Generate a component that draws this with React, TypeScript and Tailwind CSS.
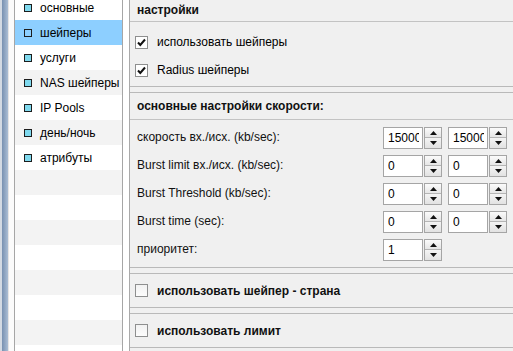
import React from "react";

const font = { fontFamily: '"Liberation Sans", Arial, sans-serif' };

const items = ["основные", "шейперы", "услуги", "NAS шейперы", "IP Pools", "день/ночь", "атрибуты"];

function Check({ checked }: { checked: boolean }) {
  return (
    <div className={"w-[13px] h-[13px] border border-[#8e8f8f] flex items-center justify-center shrink-0 " + (checked ? "bg-white" : "bg-gradient-to-b from-[#f2f2f2] to-[#fcfcfc]")}>
      {checked && (
        <svg width="11" height="11" viewBox="0 0 11 11">
          <path d="M2 5.5 L4.3 8 L9 2.5" stroke="#111" strokeWidth="2" fill="none" />
        </svg>
      )}
    </div>
  );
}

function Spinner({ value }: { value: string }) {
  return (
    <div className="flex h-[22px]">
      <div className="w-[40px] h-[22px] border border-[#a5a5a5] bg-white flex items-center">
        <div className="ml-[4px] w-[31px] overflow-hidden whitespace-nowrap text-[12px] leading-none text-black">{value}</div>
      </div>
      <div className="ml-[1px] w-[18px] h-[22px] flex flex-col border border-[#a5a5a5]">
        <div className="h-[10px] flex items-center justify-center bg-gradient-to-b from-[#fbfbfb] to-[#e6e6e6] border-b border-[#b5b5b5]">
          <svg width="7" height="4" viewBox="0 0 7 4"><path d="M0 4 L3.5 0 L7 4 Z" fill="#111" /></svg>
        </div>
        <div className="flex-1 flex flex-col items-center justify-center bg-gradient-to-b from-[#f4f4f4] to-[#e2e2e2]">
          <svg width="7" height="4" viewBox="0 0 7 4"><path d="M0 0 L7 0 L3.5 4 Z" fill="#111" /></svg>
        </div>
      </div>
    </div>
  );
}

function SpeedRow({ label, a, b }: { label: string; a: string; b?: string }) {
  return (
    <div className="h-[28px] flex items-center pr-[6px]">
      <div className="flex-1 pl-[7px] text-[12px] text-[#111] -mt-[2px]">{label}</div>
      <div className="w-[124px] flex gap-[6px]">
        <Spinner value={a} />
        {b !== undefined && <Spinner value={b} />}
      </div>
    </div>
  );
}

export default function App() {
  const rows = Array.from({ length: 15 }, (_, i) => i);
  return (
    <div className="w-[513px] h-[351px] overflow-hidden flex bg-white text-black" style={font}>
      <div className="w-[2px] h-full bg-[#d3dae3]" />
      <div className="w-[6px] h-full bg-gradient-to-r from-[#7891b1] to-[#aabdd4]" />
      <div className="w-[6px] h-full bg-[#fbfbfb] border-l border-[#e4e4e4]" />
      <div className="w-[109px] h-full border-l border-r border-[#a6a6a6] overflow-hidden bg-white">
        <div className="-mt-[5px]">
          {rows.map((i) => {
            const label = items[i];
            const sel = i === 1;
            const bg = sel ? "bg-[#8dcfff]" : i % 2 === 1 ? "bg-[#f3f3f3]" : "bg-white";
            return (
              <div key={i} className={"h-[25px] flex items-center " + bg}>
                {label && (
                  <>
                    <div className={"ml-[9px] w-[8px] h-[8px] border border-[#1d1d1d] " + (sel ? "bg-[#8dcfff]" : "bg-[#7fd9ee]")} />
                    <div className="ml-[8px] text-[12px] whitespace-nowrap">{label}</div>
                  </>
                )}
              </div>
            );
          })}
        </div>
      </div>
      <div className="w-[6px] h-full bg-white" />
      <div className="flex-1 h-full bg-[#f0f0f0] border-l border-[#a9a9a9] flex flex-col">
        {/* panel 1 */}
        <div className="h-[87px] border-b border-[#b9b9b9] flex flex-col">
          <div className="h-[22px] border-b border-[#c3c3c3] flex items-center pl-[7px] pb-[2px] text-[12px] font-bold text-[#111]">настройки</div>
          <div className="pt-[6px]">
            <div className="h-[28px] flex items-center pl-[5px] gap-[9px] text-[12px]">
              <Check checked />
              <span>использовать шейперы</span>
            </div>
            <div className="h-[28px] flex items-center pl-[5px] gap-[9px] text-[12px]">
              <Check checked />
              <span>Radius шейперы</span>
            </div>
          </div>
        </div>
        {/* panel 2 */}
        <div className="mt-[5px] h-[176px] border-t border-b border-[#b9b9b9] flex flex-col">
          <div className="h-[27px] border-b border-[#c3c3c3] flex items-center pl-[7px] text-[12px] font-bold text-[#111]">основные настройки скорости:</div>
          <div className="pt-[4px]">
            <SpeedRow label="скорость вх./исх. (kb/sec):" a="15000" b="15000" />
            <SpeedRow label="Burst limit вх./исх. (kb/sec):" a="0" b="0" />
            <SpeedRow label="Burst Threshold (kb/sec):" a="0" b="0" />
            <SpeedRow label="Burst time (sec):" a="0" b="0" />
            <SpeedRow label="приоритет:" a="1" />
          </div>
        </div>
        {/* panel 3 */}
        <div className="mt-[5px] h-[35px] border-t border-b border-[#b9b9b9] flex items-center pl-[5px] gap-[9px] text-[12px] font-bold text-[#111]">
          <Check checked={false} />
          <span>использовать шейпер - страна</span>
        </div>
        {/* panel 4 */}
        <div className="mt-[5px] h-[35px] border-t border-b border-[#b9b9b9] flex items-center pl-[5px] gap-[9px] text-[12px] font-bold text-[#111]">
          <Check checked={false} />
          <span>использовать лимит</span>
        </div>
      </div>
    </div>
  );
}
